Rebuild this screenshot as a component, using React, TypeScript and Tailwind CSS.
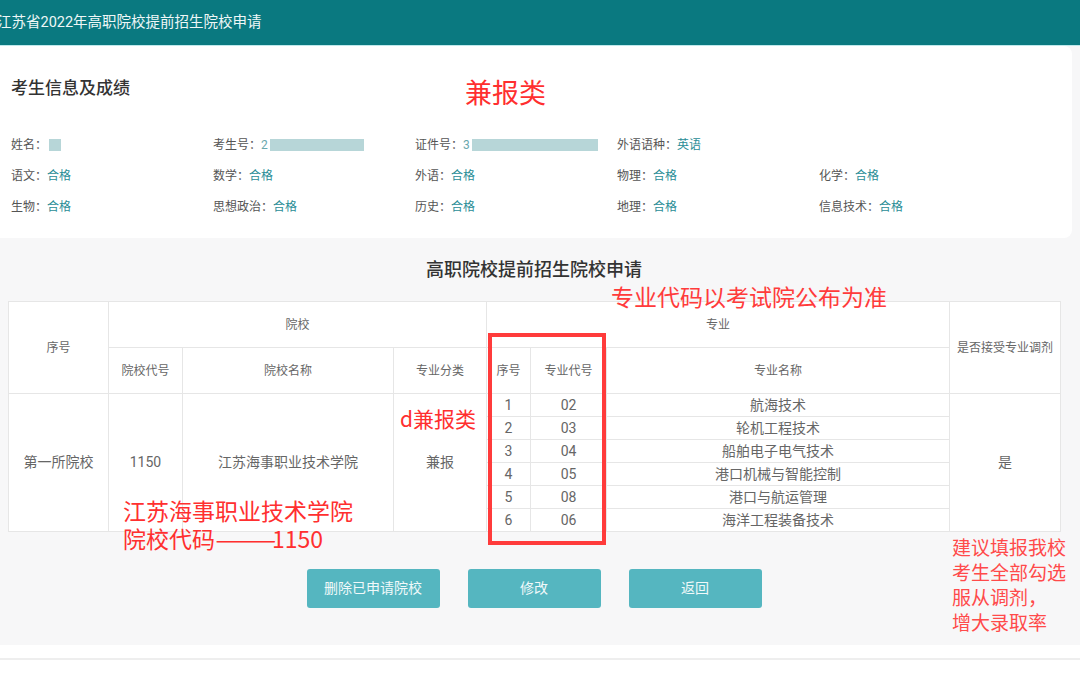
import React from "react";

const FONT = "font-['Roboto','Noto_Sans_CJK_SC',sans-serif]";
const RED = "font-['Noto_Sans_CJK_SC',sans-serif] text-[#ff2f2f]";

const infoRows: { label: string; value?: string; blur?: string; lead?: string }[][] = [
  [
    { label: "姓名", blur: "w-[12px]", lead: "" },
    { label: "考生号", blur: "w-[94px]", lead: "2" },
    { label: "证件号", blur: "w-[126px]", lead: "3" },
    { label: "外语语种", value: "英语" },
  ],
  [
    { label: "语文", value: "合格" },
    { label: "数学", value: "合格" },
    { label: "外语", value: "合格" },
    { label: "物理", value: "合格" },
    { label: "化学", value: "合格" },
  ],
  [
    { label: "生物", value: "合格" },
    { label: "思想政治", value: "合格" },
    { label: "历史", value: "合格" },
    { label: "地理", value: "合格" },
    { label: "信息技术", value: "合格" },
  ],
];

const majors = [
  ["1", "02", "航海技术"],
  ["2", "03", "轮机工程技术"],
  ["3", "04", "船舶电子电气技术"],
  ["4", "05", "港口机械与智能控制"],
  ["5", "08", "港口与航运管理"],
  ["6", "06", "海洋工程装备技术"],
];

const th = "border border-[#e6e6e6] font-normal text-[12px] text-[#666] text-center";
const td = "border border-[#e6e6e6] text-center text-[#666]";

export default function App() {
  return (
    <div className={`${FONT} relative w-[1080px] h-[674px] overflow-hidden bg-white`}>
      <header className="h-[46px] bg-[#0a7980] border-b border-[#bfe9ec] flex items-center">
        <h1 className="ml-[-3px] text-[14.5px] text-[#eef7f7]">江苏省2022年高职院校提前招生院校申请</h1>
      </header>

      <div className="bg-[#f7f7f8]">
        <section className="bg-white mr-[8px] rounded-br-[8px] rounded-tr-[8px] pt-[28px] pb-[16px] px-[11px] h-[192px]">
          <h2 className="text-[17px] font-medium text-[#333] leading-[28px]">考生信息及成绩</h2>
          <div className="mt-[27px] flex flex-col">
            {infoRows.map((row, i) => (
              <div key={i} className="grid grid-cols-[202px_202px_202px_202px_202px] h-[31px] items-center text-[12px]">
                {row.map((c) => (
                  <div key={c.label} className="flex items-center">
                    <span className="text-[#555]">{c.label}：</span>
                    {c.value && <span className="text-[#2a8d96]">{c.value}</span>}
                    {c.blur !== undefined && (
                      <span className="flex items-center">
                        <span className="text-[#6aa8ad]">{c.lead}</span>
                        <span className={`${c.blur} h-[12px] bg-[#b7d6d8] ml-[2px]`} />
                      </span>
                    )}
                  </div>
                ))}
              </div>
            ))}
          </div>
        </section>

        <section className="h-[407px] pt-[17px] pl-[8px] pr-[20px]">
          <h3 className="text-center text-[18px] font-medium text-[#333] leading-[30px]">高职院校提前招生院校申请</h3>
          <table className="mt-[16px] w-[1052px] table-fixed border-collapse bg-white">
            <colgroup>
              <col className="w-[100px]" />
              <col className="w-[74px]" />
              <col className="w-[211px]" />
              <col className="w-[93px]" />
              <col className="w-[44px]" />
              <col className="w-[76px]" />
              <col className="w-[343px]" />
              <col className="w-[111px]" />
            </colgroup>
            <thead>
              <tr className="h-[46px]">
                <th rowSpan={2} className={th}>序号</th>
                <th colSpan={3} className={th}>院校</th>
                <th colSpan={3} className={th}>专业</th>
                <th rowSpan={2} className={th}>是否接受专业调剂</th>
              </tr>
              <tr className="h-[46px]">
                <th className={th}>院校代号</th>
                <th className={th}>院校名称</th>
                <th className={th}>专业分类</th>
                <th className={th}>序号</th>
                <th className={th}>专业代号</th>
                <th className={th}>专业名称</th>
              </tr>
            </thead>
            <tbody>
              {majors.map((m, i) => (
                <tr key={m[0]} className="h-[23px]">
                  {i === 0 && (
                    <>
                      <td rowSpan={6} className={`${td} text-[14px]`}>第一所院校</td>
                      <td rowSpan={6} className={`${td} text-[14px]`}>1150</td>
                      <td rowSpan={6} className={`${td} text-[14px]`}>江苏海事职业技术学院</td>
                      <td rowSpan={6} className={`${td} text-[14px]`}>兼报</td>
                    </>
                  )}
                  <td className={`${td} text-[14px] leading-[22px]`}>{m[0]}</td>
                  <td className={`${td} text-[14px] leading-[22px]`}>{m[1]}</td>
                  <td className={`${td} text-[14px] leading-[22px]`}>{m[2]}</td>
                  {i === 0 && (
                    <td rowSpan={6} className={`${td} text-[14px]`}>是</td>
                  )}
                </tr>
              ))}
            </tbody>
          </table>

          <div className="mt-[37px] flex justify-center gap-[28px]">
            {["删除已申请院校", "修改", "返回"].map((b) => (
              <button key={b} className="w-[133px] h-[39px] rounded-[3px] bg-[#55b6c0] text-[#f0f9fa] text-[14px]">
                {b}
              </button>
            ))}
          </div>
        </section>
      </div>
      <div className="mt-[13px] h-[2px] bg-[#eeeeee]" />

      {/* red annotations over the screenshot */}
      <span className={`${RED} absolute left-[465px] top-[74px] text-[27px] leading-[36px]`}>兼报类</span>
      <span className={`${RED} absolute left-[611px] top-[281px] text-[23px] leading-[30px] text-[#ff3b3b]`}>专业代码以考试院公布为准</span>
      <span className={`${RED} absolute left-[400px] top-[404px] text-[21px] leading-[28px]`}>d兼报类</span>
      <div className={`${RED} absolute left-[123px] top-[496px] text-[23px] leading-[28px]`}>
        <div>江苏海事职业技术学院</div>
        <div className="flex">
          <span>院校代码</span>
          <span className="inline-block w-[57px] overflow-visible">
            <span className="inline-block origin-left scale-x-[1.6]">——</span>
          </span>
          <span>1150</span>
        </div>
      </div>
      <div className="absolute left-[488px] top-[333px] w-[118px] h-[212px] border-[4px] border-[#ff3b3b]" />
      <div className={`${RED} absolute left-[952px] top-[534px] text-[19px] leading-[25px] text-[#ff4a4a]`}>
        <div>建议填报我校</div>
        <div>考生全部勾选</div>
        <div>服从调剂，</div>
        <div>增大录取率</div>
      </div>
    </div>
  );
}
